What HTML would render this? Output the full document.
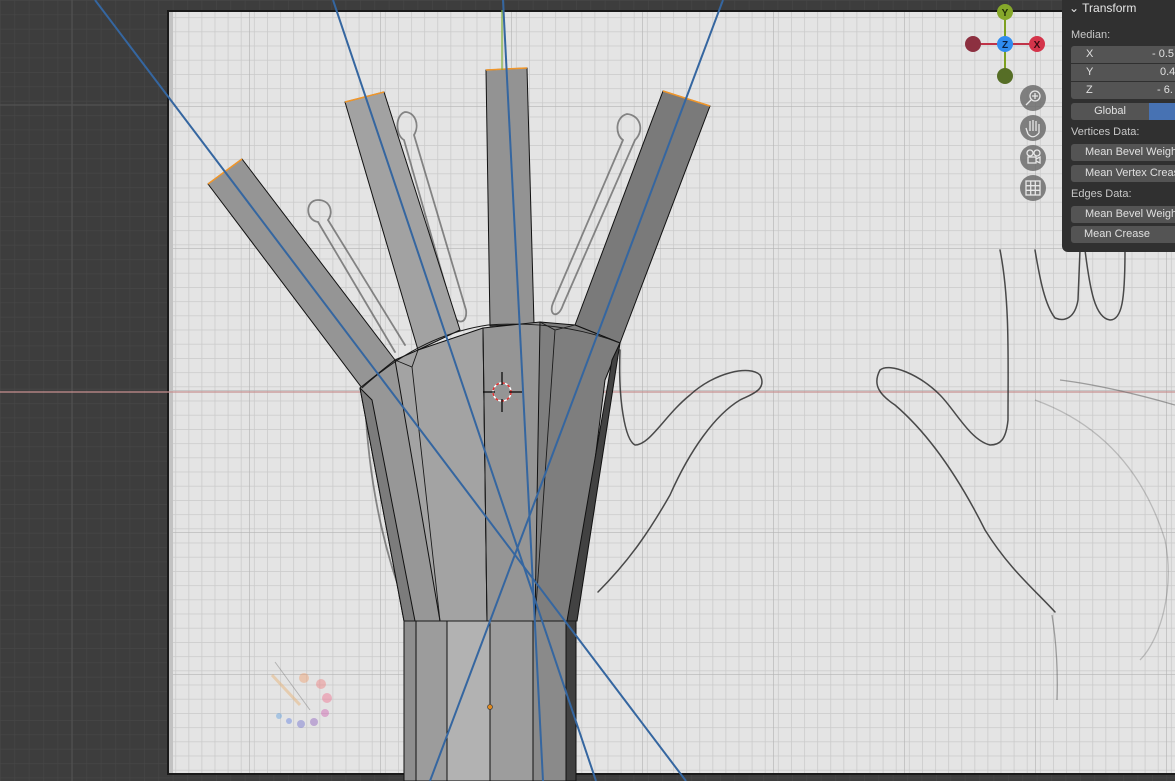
<!DOCTYPE html>
<html><head><meta charset="utf-8"><style>
html,body{margin:0;padding:0;width:1175px;height:781px;overflow:hidden;background:#3d3d3d;font-family:"Liberation Sans","DejaVu Sans",sans-serif}
svg{position:absolute;left:0;top:0}
.panel{position:absolute;left:1062px;top:0;width:113px;height:252px;background:#303030;border-bottom-left-radius:6px;color:#d8d8d8;font-size:11px;overflow:hidden}
.panel .t{position:absolute;left:7px;top:1px;font-size:12px;color:#e6e6e6;white-space:nowrap}
.lbl{position:absolute;left:9px;font-size:11px;color:#c8c8c8;white-space:nowrap}
.f{position:absolute;left:9px;width:110px;height:17px;background:#545454;color:#e0e0e0;font-size:11px;line-height:17px;border-radius:3px;white-space:nowrap;overflow:hidden}
</style></head><body>
<svg width="1175" height="781" viewBox="0 0 1175 781">
<defs>
<pattern id="dg" x="0" y="0" width="14.4" height="14.4" patternUnits="userSpaceOnUse"><path d="M0 0V14.4M0 0H14.4" stroke="#474747" stroke-width="1.2" fill="none"/></pattern>
<pattern id="lg" x="5" y="3" width="13.1" height="14.2" patternUnits="userSpaceOnUse"><path d="M0 0V14.2M0 0H13.1" stroke="#cacaca" stroke-width="1.5" fill="none"/></pattern>
<pattern id="lgM" x="118" y="106" width="131" height="142" patternUnits="userSpaceOnUse"><path d="M0 0V142M0 0H131" stroke="#b4b4b4" stroke-width="1.3" fill="none"/></pattern>
</defs>
<rect width="1175" height="781" fill="#3d3d3d"/>
<rect width="1175" height="781" fill="url(#dg)"/>
<line x1="72" y1="0" x2="72" y2="781" stroke="#525252" stroke-width="1.2"/>
<line x1="0" y1="105" x2="167" y2="105" stroke="#525252" stroke-width="1.2"/>
<rect x="167" y="10" width="1010" height="765" fill="#1a1a1a"/>
<rect x="169" y="12" width="1006" height="761" fill="#e4e4e4"/>
<rect x="169" y="12" width="1006" height="761" fill="url(#lg)"/>
<rect x="169" y="12" width="1006" height="761" fill="url(#lgM)"/>
<rect x="169" y="12" width="4" height="761" fill="#c2c2c2"/>
<line x1="0" y1="392" x2="1175" y2="392" stroke="#c79090" stroke-width="1.2"/>
<g fill="none" stroke="#444" stroke-width="1.8" stroke-linecap="round" opacity="0.6">
<path d="M318 222 C305 220 305 200 318 200 C330 200 334 212 328 220 L405 345"/>
<path d="M318 222 L395 352"/>
<path d="M404 140 C395 135 395 115 405 112 C415 112 420 125 414 135 L466 310 C468 325 455 325 453 312 L404 140"/>
<path d="M623 140 C615 135 615 117 627 114 C640 115 645 130 635 140 L563 305 C558 320 548 315 553 303 L623 140"/>
<path d="M365 400 C368 470 380 540 405 605"/>
</g>
<g fill="none" stroke="#2e2e2e" stroke-width="1.5" stroke-linecap="round" opacity="0.85">
<path d="M620 350 C618 400 625 440 635 445 C650 445 665 415 690 395 C715 372 750 365 760 375 C768 390 750 395 740 400 C715 415 690 450 670 495 C650 530 630 560 598 592"/>
<path d="M1000 250 C1010 300 1008 360 1008 420 C1006 440 1000 445 990 445 C970 440 955 410 940 395 C920 375 890 362 880 370 C872 385 880 395 895 405 C930 435 960 480 985 530 C1010 570 1035 590 1055 612"/>
<path d="M1035 250 C1040 280 1045 305 1055 318 C1065 322 1075 318 1078 300 L1080 250"/>
<path d="M1085 250 C1090 290 1095 318 1110 320 C1122 320 1125 300 1125 250"/>
</g>
<g fill="none" stroke="#555" stroke-width="1.3" opacity="0.5">
<path d="M1060 380 C1100 385 1140 395 1175 405"/>
<path d="M1035 400 C1090 420 1140 460 1165 540 C1175 590 1160 640 1140 660" opacity="0.6"/>
<path d="M1052 615 C1056 640 1058 670 1057 700"/>
</g>
<g opacity="0.45">
<line x1="275" y1="662" x2="310" y2="710" stroke="#777" stroke-width="1"/>
<line x1="272" y1="675" x2="300" y2="705" stroke="#e8b070" stroke-width="3"/>
<circle cx="304" cy="678" r="5" fill="#f0a070"/><circle cx="321" cy="684" r="5" fill="#f08080"/>
<circle cx="327" cy="698" r="5" fill="#f07090"/><circle cx="325" cy="713" r="4" fill="#d060b0"/>
<circle cx="314" cy="722" r="4" fill="#9060c0"/><circle cx="301" cy="724" r="4" fill="#7070d0"/>
<circle cx="289" cy="721" r="3" fill="#6080e0"/><circle cx="279" cy="716" r="3" fill="#60a0e0"/>
</g>
<g stroke="#111" stroke-width="1" stroke-linejoin="round">
<polygon points="208,184 242,159 395,360 362,388" fill="#959595"/>
<polygon points="345,102 384,92 460,330 418,350" fill="#a2a2a2"/>
<polygon points="486,70 527,68 534,324 490,326" fill="#939393"/>
<polygon points="663,91 710,106 620,343 575,325" fill="#7a7a7a"/>
<polygon points="360,388 395,360 412,367 440,621 404,621" fill="#979797"/>
<polygon points="395,360 418,350 483,328 487,621 440,621" fill="#a3a3a3"/>
<polygon points="483,328 540,322 555,330 535,621 487,621" fill="#959595"/>
<polygon points="540,322 575,325 620,343 605,380 575,621 535,621" fill="#7e7e7e"/>
<polygon points="360,388 404,621 415,621 372,400" fill="#7c7c7c"/>
<polygon points="620,343 612,360 567,621 577,621" fill="#424242"/>
<rect x="404" y="621" width="12" height="160" fill="#8e8e8e"/>
<rect x="416" y="621" width="31" height="160" fill="#9c9c9c"/>
<rect x="447" y="621" width="43" height="160" fill="#b2b2b2"/>
<rect x="490" y="621" width="43" height="160" fill="#9d9d9d"/>
<rect x="533" y="621" width="33" height="160" fill="#8a8a8a"/>
<rect x="566" y="621" width="10" height="160" fill="#404040"/>
</g>
<g stroke="#1a1a1a" stroke-width="0.9" fill="none">
<path d="M362 388 Q420 335 488 325 Q560 320 620 343"/>
<path d="M395 360 L412 367 L418 350 M412 367 L440 621"/>
<path d="M483 328 L487 621 M540 322 L555 330 L575 325 M555 330 L535 621"/>
<path d="M404 621 H576"/>
</g>
<g stroke="#f0962a" stroke-width="1.5">
<line x1="208" y1="184" x2="242" y2="159"/><line x1="345" y1="102" x2="384" y2="92"/>
<line x1="486" y1="70" x2="527" y2="68"/><line x1="663" y1="91" x2="710" y2="106"/>
</g>
<circle cx="490" cy="707" r="2.5" fill="#e08a20" stroke="#333" stroke-width="0.6"/>
<line x1="502" y1="10" x2="502" y2="70" stroke="#7fb03a" stroke-width="1.2"/>
<g stroke="#3566a0" stroke-width="2">
<line x1="95" y1="0" x2="686" y2="781"/>
<line x1="333" y1="0" x2="596" y2="781"/>
<line x1="503" y1="0" x2="543" y2="781"/>
<line x1="723" y1="0" x2="430" y2="781"/>
</g>
<circle cx="502" cy="392" r="9" fill="none" stroke="#fff" stroke-width="1.5"/>
<circle cx="502" cy="392" r="9" fill="none" stroke="#e03030" stroke-width="1.5" stroke-dasharray="3 3"/>
<g stroke="#000" stroke-width="1.2"><line x1="483" y1="392" x2="495" y2="392"/><line x1="509" y1="392" x2="522" y2="392"/><line x1="502" y1="372" x2="502" y2="385"/><line x1="502" y1="399" x2="502" y2="412"/></g>
<line x1="973" y1="44" x2="1037" y2="44" stroke="#c03348" stroke-width="2"/>
<line x1="1005" y1="12" x2="1005" y2="76" stroke="#7da020" stroke-width="2"/>
<circle cx="973" cy="44" r="8" fill="#8c3040"/>
<circle cx="1005" cy="76" r="8" fill="#566e26"/>
<circle cx="1037" cy="44" r="8" fill="#d4344a"/>
<circle cx="1005" cy="12" r="8" fill="#86a82a"/>
<circle cx="1005" cy="44" r="8" fill="#2f8cf0"/>
<g font-family="Liberation Sans,sans-serif" font-size="10" font-weight="bold" text-anchor="middle">
<text x="1037" y="48" fill="#3a0a10">X</text><text x="1005" y="16" fill="#223008">Y</text><text x="1005" y="48" fill="#0a2040">Z</text></g>
<g fill="#6e6e6e" opacity="0.85">
<circle cx="1033" cy="98" r="13"/><circle cx="1033" cy="128" r="13"/><circle cx="1033" cy="158" r="13"/><circle cx="1033" cy="188" r="13"/></g>
<g stroke="#e8e8e8" stroke-width="1.3" fill="none">
<circle cx="1035" cy="96" r="5"/><line x1="1031" y1="100" x2="1026" y2="105"/><path d="M1035 93v6M1032 96h6"/>
<path d="M1028 134 L1026 128 M1030 131 V121 M1033 131 V120 M1036 131 V121 M1039 133 V124 M1028 134 Q1033 140 1039 133"/>
<circle cx="1030" cy="153" r="3"/><circle cx="1037" cy="153" r="3"/><rect x="1028" y="157" width="8" height="6"/><path d="M1036 159 l4 -2 v6 l-4 -2"/>
<rect x="1026" y="181" width="14" height="14"/><path d="M1026 185.7h14M1026 190.3h14M1030.7 181v14M1035.3 181v14"/>
</g>
</svg>
<div class="panel">
<div class="t">⌄ Transform</div>
<div class="lbl" style="top:29px">Median:</div>
<div class="f" style="top:46px;border-radius:3px 3px 0 0"><span style="margin-left:15px">X</span><span style="position:absolute;left:81px">- 0.5</span></div>
<div class="f" style="top:64px;border-radius:0"><span style="margin-left:15px">Y</span><span style="position:absolute;left:89px">0.4</span></div>
<div class="f" style="top:82px;border-radius:0 0 3px 3px"><span style="margin-left:15px">Z</span><span style="position:absolute;left:86px">- 6.</span></div>
<div class="f" style="top:103px;width:78px;text-align:center;border-radius:3px 0 0 3px">Global</div>
<div class="f" style="top:103px;left:87px;width:40px;background:#4772b3;border-radius:0"></div>
<div class="lbl" style="top:126px">Vertices Data:</div>
<div class="f" style="top:144px"><span style="margin-left:14px">Mean Bevel Weight</span></div>
<div class="f" style="top:165px"><span style="margin-left:14px">Mean Vertex Crease</span></div>
<div class="lbl" style="top:188px">Edges Data:</div>
<div class="f" style="top:206px"><span style="margin-left:14px">Mean Bevel Weight</span></div>
<div class="f" style="top:226px"><span style="margin-left:13px">Mean Crease</span></div>
</div>
</body></html>
